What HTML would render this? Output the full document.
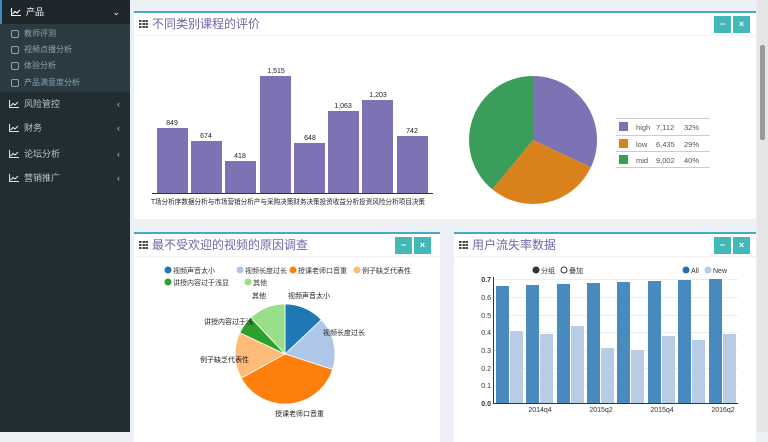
<!DOCTYPE html>
<html><head><meta charset="utf-8"><style>
*{margin:0;padding:0;box-sizing:border-box}
body{width:768px;height:432px;overflow:hidden;background:#ecf0f5;font-family:"Liberation Sans","Noto Sans CJK SC",sans-serif;position:relative}
.sb{position:absolute;left:0;top:0;width:130px;height:432px;background:#222d32;color:#b8c7ce;font-size:9px}
.it{position:absolute;left:0;width:130px;height:24px;line-height:24px;padding-left:24px}
.it svg{position:absolute;left:9px;top:8px}
.it .ar{position:absolute;right:10px;top:0}
.sub{position:absolute;left:0;top:24px;width:130px;height:68px;background:#2c3b41}
.si{position:absolute;left:24px;font-size:8px;color:#8aa4af}
.si:before{content:"";position:absolute;left:-13px;top:2px;width:6px;height:6px;border:1px solid #8aa4af;border-radius:2px}
.box{position:absolute;background:#fff;border-top:2px solid #48a9c4}
.hd{position:absolute;left:0;top:0;right:0;height:23px;border-bottom:1px solid #f2f2f2;color:#6e68a6;font-size:12px;line-height:22px;padding-left:18px}
.hd:before{content:"";position:absolute;left:5px;top:7px;width:9px;height:8px;background:repeating-linear-gradient(90deg,#444 0 2.5px,#fff 2.5px 3.3px),#444;}
.hd:after{content:"";position:absolute;left:5px;top:9px;width:9px;height:1px;background:#fff;box-shadow:0 3px 0 #fff}
.bt{position:absolute;top:3px;width:17px;height:17px;background:#43b8b8;color:#fff;font-size:9px;text-align:center;line-height:17px;font-weight:bold}
.scr{position:absolute;left:757px;top:0;width:11px;height:432px;background:#e6e6e6}
.scr div{position:absolute;left:3px;top:45px;width:5px;height:95px;background:#999;border-radius:2px}
</style></head><body>
<div class="sb">
<div class="it" style="top:0;color:#fff;background:#1e282c;border-left:2px solid #3c8dbc"><svg width="10" height="8" viewBox="0 0 10 8"><path d="M0.5,0 V7.5 H10 M1.5,6 L4,3.5 L6,5 L9,2" fill="none" stroke="#fff" stroke-width="1.1"/></svg>产品<span class="ar">⌄</span></div>
<div class="sub">
<div class="si" style="top:4px">教师评测</div>
<div class="si" style="top:20px">视频点播分析</div>
<div class="si" style="top:36px">体验分析</div>
<div class="si" style="top:53px">产品满意度分析</div>
</div>
<div class="it" style="top:92px"><svg width="10" height="8" viewBox="0 0 10 8"><path d="M0.5,0 V7.5 H10 M1.5,6 L4,3.5 L6,5 L9,2" fill="none" stroke="#dde" stroke-width="1.1"/></svg>风险管控<span class="ar">‹</span></div>
<div class="it" style="top:116px"><svg width="10" height="8" viewBox="0 0 10 8"><path d="M0.5,0 V7.5 H10 M1.5,6 L4,3.5 L6,5 L9,2" fill="none" stroke="#dde" stroke-width="1.1"/></svg>财务<span class="ar">‹</span></div>
<div class="it" style="top:142px"><svg width="10" height="8" viewBox="0 0 10 8"><path d="M0.5,0 V7.5 H10 M1.5,6 L4,3.5 L6,5 L9,2" fill="none" stroke="#dde" stroke-width="1.1"/></svg>论坛分析<span class="ar">‹</span></div>
<div class="it" style="top:166px"><svg width="10" height="8" viewBox="0 0 10 8"><path d="M0.5,0 V7.5 H10 M1.5,6 L4,3.5 L6,5 L9,2" fill="none" stroke="#dde" stroke-width="1.1"/></svg>营销推广<span class="ar">‹</span></div>
</div>
<div class="scr"><div></div></div>

<div class="box" style="left:134px;top:11px;width:622px;height:208px">
<div class="hd">不同类别课程的评价</div>
<div class="bt" style="left:580px">−</div><div class="bt" style="left:599px">×</div>
</div>
<div class="box" style="left:134px;top:232px;width:306px;height:210px">
<div class="hd">最不受欢迎的视频的原因调查</div>
<div class="bt" style="left:261px">−</div><div class="bt" style="left:280px">×</div>
</div>
<div class="box" style="left:454px;top:232px;width:302px;height:210px">
<div class="hd">用户流失率数据</div>
<div class="bt" style="left:260px">−</div><div class="bt" style="left:279px">×</div>
</div>

<svg width="768" height="432" style="position:absolute;left:0;top:0" font-family="Liberation Sans,Noto Sans CJK SC,sans-serif">
<g fill="#7b73b4">
<rect x="157" y="128" width="31" height="65"/><rect x="191" y="141" width="31" height="52"/><rect x="225" y="161" width="31" height="32"/><rect x="260" y="76" width="31" height="117"/><rect x="294" y="143" width="31" height="50"/><rect x="328" y="111" width="31" height="82"/><rect x="362" y="100" width="31" height="93"/><rect x="397" y="136" width="31" height="57"/>
</g>
<line x1="152" y1="193.5" x2="433" y2="193.5" stroke="#333" stroke-width="1"/>
<g font-size="7" fill="#222" text-anchor="middle">
<text x="172" y="125">849</text><text x="206" y="138">674</text><text x="240" y="158">418</text><text x="276" y="73">1,515</text><text x="310" y="140">648</text><text x="343" y="108">1,063</text><text x="378" y="97">1,203</text><text x="412" y="133">742</text>
</g>
<text x="151" y="204" font-size="7" fill="#222" textLength="274" lengthAdjust="spacingAndGlyphs">T场分析序数据分析与市场营销分析产与采购决策财务决策投资收益分析投资风险分析项目决策</text>

<path d="M533,140 L533,76 A64,64 0 0 1 590.9,167.3 Z" fill="#7b73b4"/>
<path d="M533,140 L590.9,167.3 A64,64 0 0 1 492.2,189.3 Z" fill="#d9821c"/>
<path d="M533,140 L492.2,189.3 A64,64 0 0 1 533,76 Z" fill="#3a9e5a"/>
<g stroke="#ccc"><line x1="616" y1="118.5" x2="710" y2="118.5"/><line x1="616" y1="135.5" x2="710" y2="135.5"/><line x1="616" y1="151.5" x2="710" y2="151.5"/><line x1="616" y1="167.5" x2="710" y2="167.5"/></g>
<rect x="619" y="122" width="9" height="9" fill="#7b73b4"/><rect x="619" y="139" width="9" height="9" fill="#d9821c"/><rect x="619" y="155" width="9" height="9" fill="#3a9e5a"/>
<g font-size="7.5" fill="#555"><text x="636" y="130">high</text><text x="656" y="130">7,112</text><text x="684" y="130">32%</text>
<text x="636" y="147">low</text><text x="656" y="147">6,435</text><text x="684" y="147">29%</text>
<text x="636" y="163">mid</text><text x="656" y="163">9,002</text><text x="684" y="163">40%</text></g>

<g font-size="7" fill="#333">
<circle cx="168" cy="270" r="3.5" fill="#1f77b4"/><text x="173" y="273">视频声音太小</text>
<circle cx="240" cy="270" r="3.5" fill="#aec7e8"/><text x="245" y="273">视频长度过长</text>
<circle cx="293" cy="270" r="3.5" fill="#ff7f0e"/><text x="298" y="273">授课老师口音重</text>
<circle cx="357" cy="270" r="3.5" fill="#ffbb78"/><text x="362" y="273">例子缺乏代表性</text>
<circle cx="168" cy="282" r="3.5" fill="#2ca02c"/><text x="173" y="285">讲授内容过于浅显</text>
<circle cx="248" cy="282" r="3.5" fill="#98df8a"/><text x="253" y="285">其他</text>
</g>
<g stroke="#fff" stroke-width="0.8">
<path d="M285,354 L285,304 A50,50 0 0 1 321.4,319.7 Z" fill="#1f77b4"/>
<path d="M285,354 L321.4,319.7 A50,50 0 0 1 332.6,369.5 Z" fill="#aec7e8"/>
<path d="M285,354 L332.6,369.5 A50,50 0 0 1 241.2,378.1 Z" fill="#ff7f0e"/>
<path d="M285,354 L241.2,378.1 A50,50 0 0 1 239.8,332.7 Z" fill="#ffbb78"/>
<path d="M285,354 L239.8,332.7 A50,50 0 0 1 250.8,317.6 Z" fill="#2ca02c"/>
<path d="M285,354 L250.8,317.6 A50,50 0 0 1 285,304 Z" fill="#98df8a"/>
</g>
<g font-size="7" fill="#222">
<text x="288" y="298">视频声音太小</text><text x="323" y="335">视频长度过长</text><text x="275" y="416">授课老师口音重</text><text x="200" y="362">例子缺乏代表性</text><text x="204" y="324">讲授内容过于浅</text><text x="252" y="298">其他</text>
</g>

<g stroke="#eee"><line x1="494" y1="279.5" x2="738" y2="279.5"/><line x1="494" y1="297.5" x2="738" y2="297.5"/><line x1="494" y1="315.5" x2="738" y2="315.5"/><line x1="494" y1="332.5" x2="738" y2="332.5"/><line x1="494" y1="350.5" x2="738" y2="350.5"/><line x1="494" y1="368.5" x2="738" y2="368.5"/><line x1="494" y1="385.5" x2="738" y2="385.5"/></g>
<g fill="#4a8bbf">
<rect x="496" y="286" width="13" height="117"/><rect x="526" y="285" width="13" height="118"/><rect x="557" y="284" width="13" height="119"/><rect x="587" y="283" width="13" height="120"/><rect x="617" y="282" width="13" height="121"/><rect x="648" y="281" width="13" height="122"/><rect x="678" y="280" width="13" height="123"/><rect x="709" y="279" width="13" height="124"/>
</g>
<g fill="#b9cce6">
<rect x="510" y="331" width="13" height="72"/><rect x="540" y="334" width="13" height="69"/><rect x="571" y="326" width="13" height="77"/><rect x="601" y="348" width="13" height="55"/><rect x="631" y="350" width="13" height="53"/><rect x="662" y="336" width="13" height="67"/><rect x="692" y="340" width="13" height="63"/><rect x="723" y="334" width="13" height="69"/>
</g>
<line x1="493.5" y1="277" x2="493.5" y2="403" stroke="#333"/><line x1="493" y1="403.5" x2="738" y2="403.5" stroke="#333"/>
<g font-size="7" fill="#333" text-anchor="end">
<text x="491" y="282" font-weight="bold">0.7</text><text x="491" y="300">0.6</text><text x="491" y="318">0.5</text><text x="491" y="335">0.4</text><text x="491" y="353">0.3</text><text x="491" y="371">0.2</text><text x="491" y="388">0.1</text><text x="491" y="406" font-weight="bold">0.0</text>
</g>
<g font-size="7" fill="#333" text-anchor="middle"><text x="540" y="412">2014q4</text><text x="601" y="412">2015q2</text><text x="662" y="412">2015q4</text><text x="723" y="412">2016q2</text></g>
<circle cx="536" cy="270" r="3.5" fill="#333"/><text x="541" y="273" font-size="7" fill="#333">分组</text>
<circle cx="564" cy="270" r="3" fill="none" stroke="#333"/><text x="569" y="273" font-size="7" fill="#333">叠加</text>
<circle cx="686" cy="270" r="3.5" fill="#2a6fa8"/><text x="691" y="273" font-size="7" fill="#333">All</text>
<circle cx="708" cy="270" r="3.5" fill="#b9cce6"/><text x="713" y="273" font-size="7" fill="#333">New</text>
</svg>
</body></html>
